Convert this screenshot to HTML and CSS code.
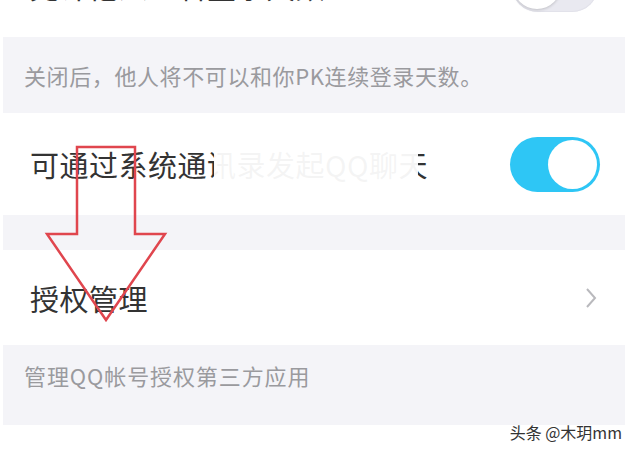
FILE: index.html
```html
<!DOCTYPE html>
<html lang="zh-CN">
<head>
    <meta charset="UTF-8">
    <meta name="viewport" content="width=device-width, initial-scale=1.0">
    <title>设置</title>
    <link rel="stylesheet" href="styles.css">
</head>
<body>
    <div class="settings">
        <!-- row scrolled mostly out of view -->
        <div class="row">
            <span class="row-title">允许他人查看登录天数</span>
            <span class="switch"></span>
        </div>
        <div class="note">关闭后，他人将不可以和你PK连续登录天数。</div>

        <div class="row">
            <span class="row-title">可通过系统通讯录发起QQ聊天</span>
            <span class="switch on"></span>
            <span class="smudge"></span>
        </div>
        <div class="gap"></div>

        <div class="row row-link">
            <span class="row-title">授权管理</span>
            <svg class="chevron" width="14" height="22" viewBox="0 0 14 22">
                <polyline points="3,2 11,11 3,20" fill="none" stroke="#b9b9bd" stroke-width="2"/>
            </svg>
        </div>
        <div class="note note-last">管理QQ帐号授权第三方应用</div>

        <div class="footer">
            <span class="watermark">头条 @木玥mm</span>
        </div>
    </div>

    <!-- red arrow drawn on top of the screenshot -->
    <svg class="arrow" width="636" height="453" viewBox="0 0 636 453">
        <polygon points="77,147 135,147 135,234 165,234 106,320 47,234 77,234"
                 fill="none" stroke="#e0464e" stroke-width="2.5" stroke-linejoin="miter"/>
    </svg>
</body>
</html>
```

FILE: styles.css
```css
body {
    margin: 0;
    width: 636px;
    height: 453px;
    overflow: hidden;
    background: #fff;
    font-family: "Noto Sans CJK SC", "Noto Sans", sans-serif;
    position: relative;
}
.settings {
    margin-top: -65px;
}
.row {
    position: relative;
    height: 102px;
    display: flex;
    align-items: center;
    justify-content: space-between;
    padding: 0 38px 0 30px;
    background: #fff;
}
.row-title {
    font-size: 29px;
    color: #333;
    letter-spacing: 0.5px;
}
.row-link {
    height: 95px;
    padding-right: 38px;
}
.switch {
    position: relative;
    width: 86px;
    height: 52px;
    border-radius: 26px;
    background: #e9e9f0;
    box-shadow: inset 0 0 0 1px #e2e2ea;
}
.switch::after {
    content: "";
    position: absolute;
    left: 1px;
    top: 1px;
    width: 48px;
    height: 48px;
    border-radius: 50%;
    background: #fff;
    box-shadow: 0 1px 3px rgba(0, 0, 0, 0.18);
}
.switch.on {
    width: 90px;
    height: 55px;
    border-radius: 28px;
    background: #2ec6f5;
    box-shadow: none;
    margin-right: -2px;
}
.switch.on::after {
    left: auto;
    right: 3px;
    top: 3px;
    width: 49px;
    height: 49px;
    box-shadow: none;
}
.smudge {
    position: absolute;
    left: 214px;
    top: 32px;
    width: 204px;
    height: 40px;
    background: rgba(255, 255, 255, 0.95);
}
.note {
    height: 76px;
    margin: 0 11px 0 3px;
    padding: 0 21px;
    background: #f4f4f8;
    display: flex;
    align-items: center;
    font-size: 22px;
    letter-spacing: 0.6px;
    color: #9a9a9e;
}
.note-last {
    height: 80px;
    align-items: flex-start;
    padding-top: 14px;
    letter-spacing: 0.9px;
    box-sizing: border-box;
}
.gap {
    height: 35px;
    margin: 0 11px 0 3px;
    background: #f4f4f8;
}
.footer {
    display: flex;
    justify-content: flex-end;
    padding: 0 14px 0 0;
}
.watermark {
    font-size: 16px;
    color: #333;
    margin-top: -5px;
}
.arrow {
    position: absolute;
    left: 0;
    top: 0;
}
```
